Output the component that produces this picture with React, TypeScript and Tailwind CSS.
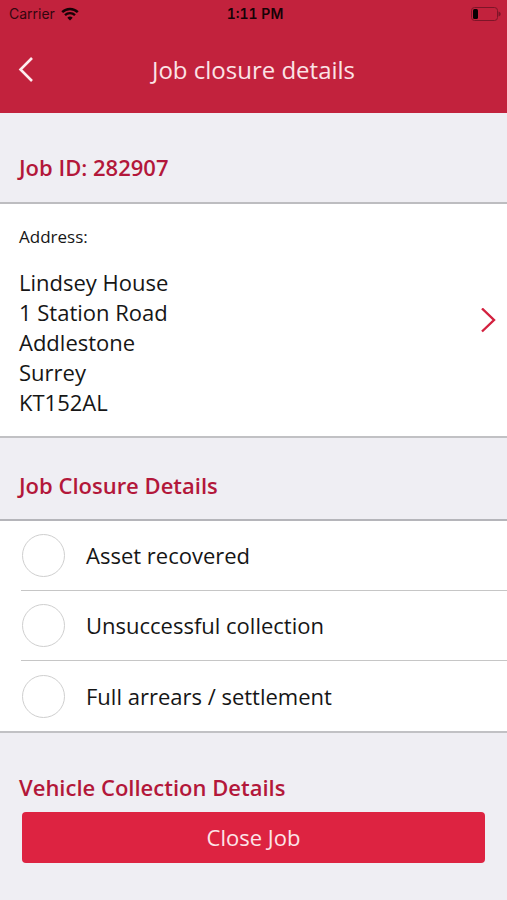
import { useState } from "react";

const addressLines = [
  "Lindsey House",
  "1 Station Road",
  "Addlestone",
  "Surrey",
  "KT152AL",
];

const closureOptions = [
  { id: "recovered", label: "Asset recovered" },
  { id: "unsuccessful", label: "Unsuccessful collection" },
  { id: "settlement", label: "Full arrears / settlement" },
];

function StatusBar() {
  return (
    <div className="grid h-[27px] grid-cols-3 items-center pr-[6px] pl-[9px] font-['Inter',sans-serif] text-[14px] text-[#33060f]">
      <div className="flex items-center gap-[6px]">
        <span>Carrier</span>
        <svg viewBox="0 0 18 14" className="h-[14px] w-[18px]" fill="none">
          <path d="M1.2 5.2a11.2 11.2 0 0 1 15.6 0" stroke="#160206" strokeWidth="2.5" />
          <path d="M4 8.2a7.2 7.2 0 0 1 10 0" stroke="#160206" strokeWidth="2.3" />
          <path d="M9 13.4 6.3 10.7a3.9 3.9 0 0 1 5.4 0Z" fill="#160206" />
        </svg>
      </div>
      <span className="text-center font-semibold tabular-nums text-[#160206]">1:11 PM</span>
      <svg viewBox="0 0 30 14" className="h-[14px] w-[30px] justify-self-end" fill="none">
        <rect x="0.5" y="0.5" width="26" height="13" rx="3" stroke="#7d1528" />
        <rect x="2" y="2" width="5" height="10" rx="1.5" fill="#080002" />
        <path d="M27.500 4.500c1.500.400 2.200 1.300 2.200 2.500s-.700 2.100-2.200 2.500Z" fill="#7d1528" />
      </svg>
    </div>
  );
}

export default function App() {
  const [reason, setReason] = useState("");

  return (
    <div className="min-h-screen bg-[#efeef3] font-['Open_Sans',sans-serif] text-[22px] text-[#161616]">
      {/* Header */}
      <header className="bg-[#c2223d]">
        <StatusBar />
        <div className="grid h-[86px] grid-cols-[48px_1fr_48px] items-center">
          <button type="button" aria-label="Back" className="flex h-12 items-center pl-[18px]">
            <svg viewBox="0 0 16 26" className="h-[26px] w-4" fill="none">
              <path d="M14 1 2.500 12.500 14 24" stroke="#fdecef" strokeWidth="2.600" />
            </svg>
          </button>
          <h1 className="text-center text-2xl text-[#fbe3e6]">Job closure details</h1>
        </div>
      </header>

      <main>
        <h2 className="border-b-2 border-[#bdbdc0] pt-[38px] pb-[19px] pl-[19px] font-semibold leading-8 text-[#b3173a]">
          Job ID: 282907
        </h2>

        {/* Address */}
        <button
          type="button"
          className="flex w-full items-center justify-between border-b-2 border-[#c1c1c4] bg-white pt-[21px] pr-[11px] pb-[19px] pl-[19px] text-left"
        >
          <span className="flex flex-col gap-[18px]">
            <span className="text-[17px] leading-6">Address:</span>
            <span className="flex flex-col leading-[30px]">
              {addressLines.map((line) => (
                <span key={line}>{line}</span>
              ))}
            </span>
          </span>
          <svg viewBox="0 0 16 26" className="h-[26px] w-4" fill="none">
            <path d="M2 .5 14 12 2 23.500" stroke="#d3213f" strokeWidth="2.400" />
          </svg>
        </button>

        {/* Closure reason */}
        <h2
          id="closure-heading"
          className="border-b-2 border-[#b5b5ba] pt-[31px] pb-[18px] pl-[19px] font-semibold leading-8 text-[#b3173a]"
        >
          Job Closure Details
        </h2>
        <div
          role="radiogroup"
          aria-labelledby="closure-heading"
          className="divide-y divide-[#c6c6c6] border-b-2 border-[#c1c1c4] bg-white pl-[21px]"
        >
          {closureOptions.map((option) => (
            <label key={option.id} htmlFor={option.id} className="flex h-[70px] items-center gap-[21px] pl-px">
              <input
                id={option.id}
                type="radio"
                name="closure-reason"
                value={option.id}
                checked={reason === option.id}
                onChange={() => setReason(option.id)}
                className="size-[43px] appearance-none rounded-full border border-[#cfcfcf] bg-white checked:border-[14px] checked:border-[#dd2341]"
              />
              <span>{option.label}</span>
            </label>
          ))}
        </div>

        <h2 className="pt-[38px] pl-[19px] font-semibold leading-8 text-[#b3173a]">
          Vehicle Collection Details
        </h2>
        <div className="px-[22px] pt-[9px] pb-9">
          <button
            type="button"
            className="h-[51px] w-full rounded-[4px] bg-[#dd2341] text-[#fce4e8]"
          >
            Close Job
          </button>
        </div>
      </main>
    </div>
  );
}
